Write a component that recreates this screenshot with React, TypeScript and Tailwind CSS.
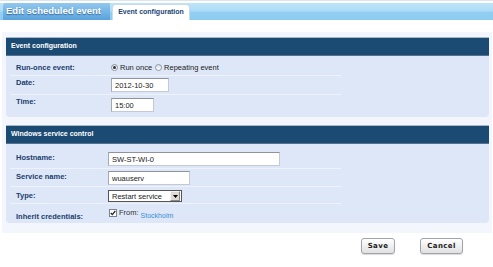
const label = "text-[7.5px] font-bold leading-[9px] text-[#1b3c6c]";
const value = "text-[7.5px] leading-[9px] text-[#222]";

function Radio({ checked }: { checked?: boolean }) {
  return (
    <span className="mr-[2px] inline-flex size-[7px] items-center justify-center rounded-full border border-[#8d96a3] bg-[linear-gradient(#d8dce2,#ffffff)]">
      {checked && <span className="size-[3px] rounded-full bg-[#333]" />}
    </span>
  );
}

function TextInput({ text, width, h = "h-[14px]" }: { text: string; width: string; h?: string }) {
  return (
    <div
      className={`${width} ${h} flex items-center border border-[#c4c9d2] border-t-[#8f949c] border-l-[#a4a9b0] bg-white pl-[3px] ${value}`}
    >
      {text}
    </div>
  );
}

function PanelHeader({ title }: { title: string }) {
  return (
    <div className="flex h-[19px] items-center border-t border-t-[#a9b9cc] border-b border-b-[#56728f] bg-[#1b4a72] pl-[5px] text-[7px] font-bold text-white">
      {title}
    </div>
  );
}

export default function App() {
  return (
    <div className="h-[267px] w-[493px] overflow-hidden bg-white font-['Liberation_Sans',Arial,sans-serif]">
      {/* title strip */}
      <div className="border-t border-[#dde4f0] pt-[2px]">
        <div className="flex h-[17px] items-end bg-[linear-gradient(#bde4f9_0%,#aedcf6_45%,#93cff1_55%,#8ccbf0_100%)] pl-[3px]">
          <div className="flex h-full w-[107px] items-center rounded-tl-[3px] bg-[linear-gradient(#92c8ee_0%,#76b5e6_50%,#5aa3dc_100%)] pl-[3px] text-[9.5px] font-bold text-white [text-shadow:0_1px_1px_rgba(20,60,110,0.6)]">
            Edit scheduled event
          </div>
          <div className="ml-[2px] flex h-[16px] w-[78px] items-center justify-center rounded-t-[4px] border border-b-0 border-[#c9dcec] bg-white text-[7px] font-bold text-[#1d4676]">
            Event configuration
          </div>
        </div>
      </div>

      {/* content */}
      <div className="mt-[12px] ml-[2px] w-[490px] bg-[#f3f6fc] pt-[5px] pr-[3px] pb-[10px] pl-[4px]">
        <PanelHeader title="Event configuration" />
        <div className="rounded-b-[4px] bg-[#dde7f7] pl-[4px]">
          <div className="w-[331px]">
            <div className="flex h-[20px] items-center border-b border-[#edf2fb] pt-[4px]">
              <div className={`w-[101px] pl-[6px] ${label}`}>Run-once event:</div>
              <div className={`flex items-center ${value}`}>
                <Radio checked />
                <span className="mr-[3px]">Run once</span>
                <Radio />
                <span>Repeating event</span>
              </div>
            </div>
            <div className="flex h-[19px] items-start border-b border-[#edf2fb]">
              <div className={`w-[101px] pt-[2px] pl-[6px] ${label}`}>Date:</div>
              <div className="pt-[2px]">
                <TextInput text="2012-10-30" width="w-[58px]" h="h-[14px]" />
              </div>
            </div>
            <div className="flex h-[22px] items-start">
              <div className={`w-[101px] pt-[2px] pl-[6px] ${label}`}>Time:</div>
              <div className="pt-[3px]">
                <TextInput text="15:00" width="w-[43px]" />
              </div>
            </div>
          </div>
        </div>

        <div className="mt-[8px]">
          <PanelHeader title="Windows service control" />
        </div>
        <div className="rounded-b-[4px] bg-[#dde7f7] pl-[4px]">
          <div className="w-[331px]">
            <div className="flex h-[25px] items-start border-b border-[#edf2fb] pt-[8px]">
              <div className={`w-[98px] pt-[1px] pl-[6px] ${label}`}>Hostname:</div>
              <TextInput text="SW-ST-WI-0" width="w-[172px]" />
            </div>
            <div className="flex h-[18px] items-start border-b border-[#edf2fb] pt-[2px]">
              <div className={`w-[98px] pt-[1px] pl-[6px] ${label}`}>Service name:</div>
              <TextInput text="wuauserv" width="w-[82px]" />
            </div>
            <div className="flex h-[17px] items-start border-b border-[#edf2fb] pt-[3px]">
              <div className={`w-[98px] pt-[1px] pl-[6px] ${label}`}>Type:</div>
              <div className="flex h-[12px] w-[74px] items-center border border-[#555] bg-white">
                <span className={`flex-1 pl-[3px] ${value}`}>Restart service</span>
                <span className="mr-px flex h-[10px] w-[10px] items-center justify-center border border-[#f4f4f4] border-r-[#888] border-b-[#888] bg-[#dedbd6]">
                  <svg width="5" height="3" viewBox="0 0 5 3">
                    <path d="M0 0H5L2.5 3Z" fill="#000" />
                  </svg>
                </span>
              </div>
            </div>
            <div className="flex h-[19px] items-start pt-[4px]">
              <div className={`w-[98px] pt-[4px] pl-[6px] ${label}`}>Inherit credentials:</div>
              <div className="flex items-start">
                <span className="mt-[1px] ml-px flex size-[8px] items-center justify-center border border-[#7a8290] bg-white">
                  <svg width="6" height="6" viewBox="0 0 6 6">
                    <path d="M0.8 3 L2.3 4.6 L5.3 1" stroke="#222" strokeWidth="1.3" fill="none" />
                  </svg>
                </span>
                <span className={`ml-[2px] ${value} text-[#333]`}>From:</span>
                <span className="mt-[3px] ml-[2px] text-[7px] leading-[9px] text-[#3b8ed6]">Stockholm</span>
              </div>
            </div>
          </div>
        </div>
      </div>

      {/* buttons */}
      <div className="mt-[5px] flex justify-end gap-[25px] pr-[30px]">
        {["Save", "Cancel"].map((t) => (
          <button
            key={t}
            type="button"
            className={`${t === "Save" ? "w-[34px]" : "w-[43px]"} flex h-[16px] items-center justify-center rounded-[3px] border border-[#a0a4aa] bg-[linear-gradient(#ffffff,#e0e0e0)] font-['DejaVu_Sans',Verdana,sans-serif] text-[7px] font-bold tracking-[0.4px] text-[#222] shadow-[0_1px_1px_rgba(0,0,0,0.15)]`}
          >
            {t}
          </button>
        ))}
      </div>
    </div>
  );
}
